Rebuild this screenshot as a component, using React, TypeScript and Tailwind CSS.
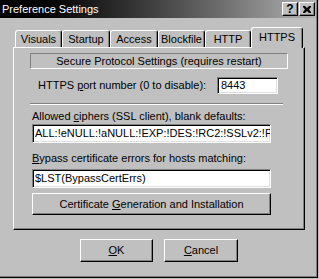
import React from 'react';

const raised =
  'border border-t-white border-l-white border-b-black border-r-black shadow-[inset_-1px_-1px_#808080]';
const sunken =
  'border border-t-[#808080] border-l-[#808080] border-b-white border-r-white shadow-[inset_1px_1px_#000,inset_-1px_-1px_#dfdfdf]';

const tabs = [
  { label: 'Visuals', w: 'w-[47px]' },
  { label: 'Startup', w: 'w-[48px]' },
  { label: 'Access', w: 'w-[48px]' },
  { label: 'Blockfile', w: 'w-[47px]' },
  { label: 'HTTP', w: 'w-[46px]' },
];

function Tab({ label, w }: { label: string; w: string }) {
  return (
    <div
      className={`${w} h-[17px] flex items-center justify-center border-t border-l border-white border-r border-r-black shadow-[inset_-1px_0_#808080] rounded-tl-[3px] rounded-tr-[3px] bg-[#c0c0c0]`}
    >
      {label}
    </div>
  );
}

export default function App() {
  return (
    <div className="w-[319px] h-[279px] bg-[#c0c0c0] font-['Liberation_Sans',Arial,sans-serif] text-[11px] leading-[13px] text-black overflow-hidden">
      <div className="w-[318px] h-[278px] shadow-[inset_-1px_-1px_#000,inset_-2px_-2px_#808080] flex flex-col">
        {/* title bar */}
        <div className="w-[316px] h-[18px] bg-linear-to-r from-black to-[#b4b4b4] flex items-center pl-[2px] pr-[1px]">
          <span className="text-white">Preference Settings</span>
          <div className="ml-auto flex gap-[1px]">
            <div className={`${raised} w-[16px] h-[14px] bg-[#c0c0c0] flex items-center justify-center font-bold text-[12px] leading-none`}>
              ?
            </div>
            <div className={`${raised} w-[16px] h-[14px] bg-[#c0c0c0] flex items-center justify-center`}>
              <svg width="8" height="7" viewBox="0 0 8 7">
                <path d="M0 0h2l2 2 2-2h2v1L6 3.5 8 6v1H6L4 5 2 7H0V6l2-2.5L0 1z" fill="#000" />
              </svg>
            </div>
          </div>
        </div>

        {/* tabs */}
        <div className="mt-[9px] ml-[15px] flex items-end h-[20px]">
          {tabs.map((t) => (
            <Tab key={t.label} label={t.label} w={t.w} />
          ))}
          <div className="relative z-10 w-[52px] h-[21px] -mb-px flex items-center justify-center border-t border-l border-white border-r border-r-black shadow-[inset_-1px_0_#808080] rounded-tl-[3px] rounded-tr-[3px] bg-[#c0c0c0] pb-[2px]">
            HTTPS
          </div>
        </div>

        {/* panel */}
        <div className="ml-[13px] w-[292px] h-[183px] border-t border-l border-white border-r border-b border-r-black border-b-black shadow-[inset_-1px_-1px_#808080] flex flex-col pl-[16px] pt-[5px]">
          <div className="w-[258px] h-[16px] border border-t-[#808080] border-l-[#808080] border-b-white border-r-white flex items-center justify-center">
            Secure Protocol Settings (requires restart)
          </div>

          <div className="mt-[8px] w-[248px] flex items-center">
            <span className="pl-[8px]">
              HTTPS <u>p</u>ort number (0 to disable):
            </span>
            <div className={`${sunken} ml-auto w-[61px] h-[17px] bg-white flex items-center pl-[3px]`}>8443</div>
          </div>

          <div className="mt-[9px] w-[253px] h-[2px] border-t border-t-[#808080] border-b border-b-white" />

          <div className="mt-[5px] pl-[2px]">
            Allowed <u>c</u>iphers (SSL client), blank defaults:
          </div>
          <div className={`${sunken} mt-[1px] ml-[2px] w-[239px] h-[19px] bg-white flex items-center pl-[2px] overflow-hidden whitespace-nowrap`}>
            ALL:!eNULL:!aNULL:!EXP:!DES:!RC2:!SSLv2:!P
          </div>

          <div className="mt-[9px] pl-[2px]">
            <u>B</u>ypass certificate errors for hosts matching:
          </div>
          <div className={`${sunken} mt-[4px] ml-[2px] w-[239px] h-[19px] bg-white flex items-center pl-[2px]`}>
            $LST(BypassCertErrs)
          </div>

          <div className={`${raised} mt-[5px] ml-[2px] w-[239px] h-[22px] flex items-center justify-center`}>
            <span>
              Certificate <u>G</u>eneration and Installation
            </span>
          </div>
        </div>

        {/* dialog buttons */}
        <div className="mt-[9px] flex">
          <div className={`${raised} ml-[80px] w-[73px] h-[23px] flex items-center justify-center`}>
            <span>
              <u>O</u>K
            </span>
          </div>
          <div className={`${raised} ml-[11px] w-[74px] h-[23px] flex items-center justify-center`}>
            <span>
              <u>C</u>ancel
            </span>
          </div>
        </div>
      </div>
    </div>
  );
}
